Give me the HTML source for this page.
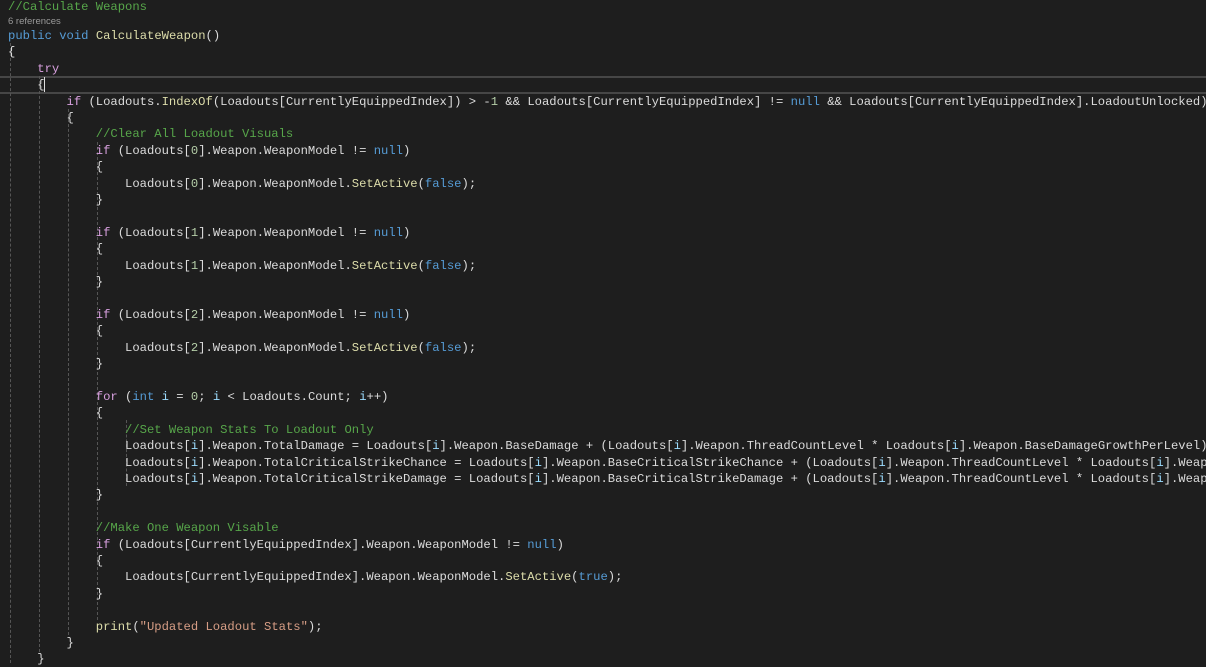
<!DOCTYPE html>
<html><head><meta charset="utf-8"><style>
html,body{margin:0;padding:0;background:#1e1e1e;width:1206px;height:667px;overflow:hidden;position:relative}
.l{position:absolute;left:8px;width:1198px;overflow:hidden;white-space:pre;font-family:"Liberation Mono",monospace;font-size:12.2px;line-height:16.4px;color:#dcdcdc}
.c{color:#57a64a}.k{color:#569cd6}.f{color:#d8a0df}.m{color:#dcdcaa}.n{color:#b5cea8}.v{color:#9cdcfe}.s{color:#d69d85}
.ref{position:absolute;left:8px;top:16px;font-family:"Liberation Sans",sans-serif;font-size:9.5px;color:#999}
.g{position:absolute;width:0;border-left:1px dashed #555}
.cur{position:absolute;left:0;top:76px;width:1206px;height:14px;border-top:2px solid #464646;border-bottom:2px solid #464646}
.caret{position:absolute;left:44px;top:77px;width:1px;height:15px;background:#dcdcdc}
</style></head><body>
<div class="cur"></div>
<div class="g" style="left:10px;top:43px;height:620px"></div>
<div class="g" style="left:39px;top:76px;height:576px"></div>
<div class="g" style="left:68px;top:109px;height:526px"></div>
<div class="g" style="left:97px;top:142px;height:478px"></div>
<div class="g" style="left:126px;top:420px;height:66px"></div>
<div class="caret"></div>
<div class="l" style="top:-1px;line-height:16px"><span class="c">//Calculate Weapons</span></div>
<div class="ref">6 references</div>
<div class="l" style="top:28px"><span class="k">public</span> <span class="k">void</span> <span class="m">CalculateWeapon</span>()
{
    <span class="f">try</span>
    {
        <span class="f">if</span> (Loadouts.<span class="m">IndexOf</span>(Loadouts[CurrentlyEquippedIndex]) &gt; -<span class="n">1</span> &amp;&amp; Loadouts[CurrentlyEquippedIndex] != <span class="k">null</span> &amp;&amp; Loadouts[CurrentlyEquippedIndex].LoadoutUnlocked)
        {
            <span class="c">//Clear All Loadout Visuals</span>
            <span class="f">if</span> (Loadouts[<span class="n">0</span>].Weapon.WeaponModel != <span class="k">null</span>)
            {
                Loadouts[<span class="n">0</span>].Weapon.WeaponModel.<span class="m">SetActive</span>(<span class="k">false</span>);
            }

            <span class="f">if</span> (Loadouts[<span class="n">1</span>].Weapon.WeaponModel != <span class="k">null</span>)
            {
                Loadouts[<span class="n">1</span>].Weapon.WeaponModel.<span class="m">SetActive</span>(<span class="k">false</span>);
            }

            <span class="f">if</span> (Loadouts[<span class="n">2</span>].Weapon.WeaponModel != <span class="k">null</span>)
            {
                Loadouts[<span class="n">2</span>].Weapon.WeaponModel.<span class="m">SetActive</span>(<span class="k">false</span>);
            }

            <span class="f">for</span> (<span class="k">int</span> <span class="v">i</span> = <span class="n">0</span>; <span class="v">i</span> &lt; Loadouts.Count; <span class="v">i</span>++)
            {
                <span class="c">//Set Weapon Stats To Loadout Only</span>
                Loadouts[<span class="v">i</span>].Weapon.TotalDamage = Loadouts[<span class="v">i</span>].Weapon.BaseDamage + (Loadouts[<span class="v">i</span>].Weapon.ThreadCountLevel * Loadouts[<span class="v">i</span>].Weapon.BaseDamageGrowthPerLevel);
                Loadouts[<span class="v">i</span>].Weapon.TotalCriticalStrikeChance = Loadouts[<span class="v">i</span>].Weapon.BaseCriticalStrikeChance + (Loadouts[<span class="v">i</span>].Weapon.ThreadCountLevel * Loadouts[<span class="v">i</span>].Weapon.BaseCriticalStrikeChanceGrowth);
                Loadouts[<span class="v">i</span>].Weapon.TotalCriticalStrikeDamage = Loadouts[<span class="v">i</span>].Weapon.BaseCriticalStrikeDamage + (Loadouts[<span class="v">i</span>].Weapon.ThreadCountLevel * Loadouts[<span class="v">i</span>].Weapon.BaseCriticalStrikeDamageGrowth);
            }

            <span class="c">//Make One Weapon Visable</span>
            <span class="f">if</span> (Loadouts[CurrentlyEquippedIndex].Weapon.WeaponModel != <span class="k">null</span>)
            {
                Loadouts[CurrentlyEquippedIndex].Weapon.WeaponModel.<span class="m">SetActive</span>(<span class="k">true</span>);
            }

            <span class="m">print</span>(<span class="s">"Updated Loadout Stats"</span>);
        }
    }</div>
</body></html>
